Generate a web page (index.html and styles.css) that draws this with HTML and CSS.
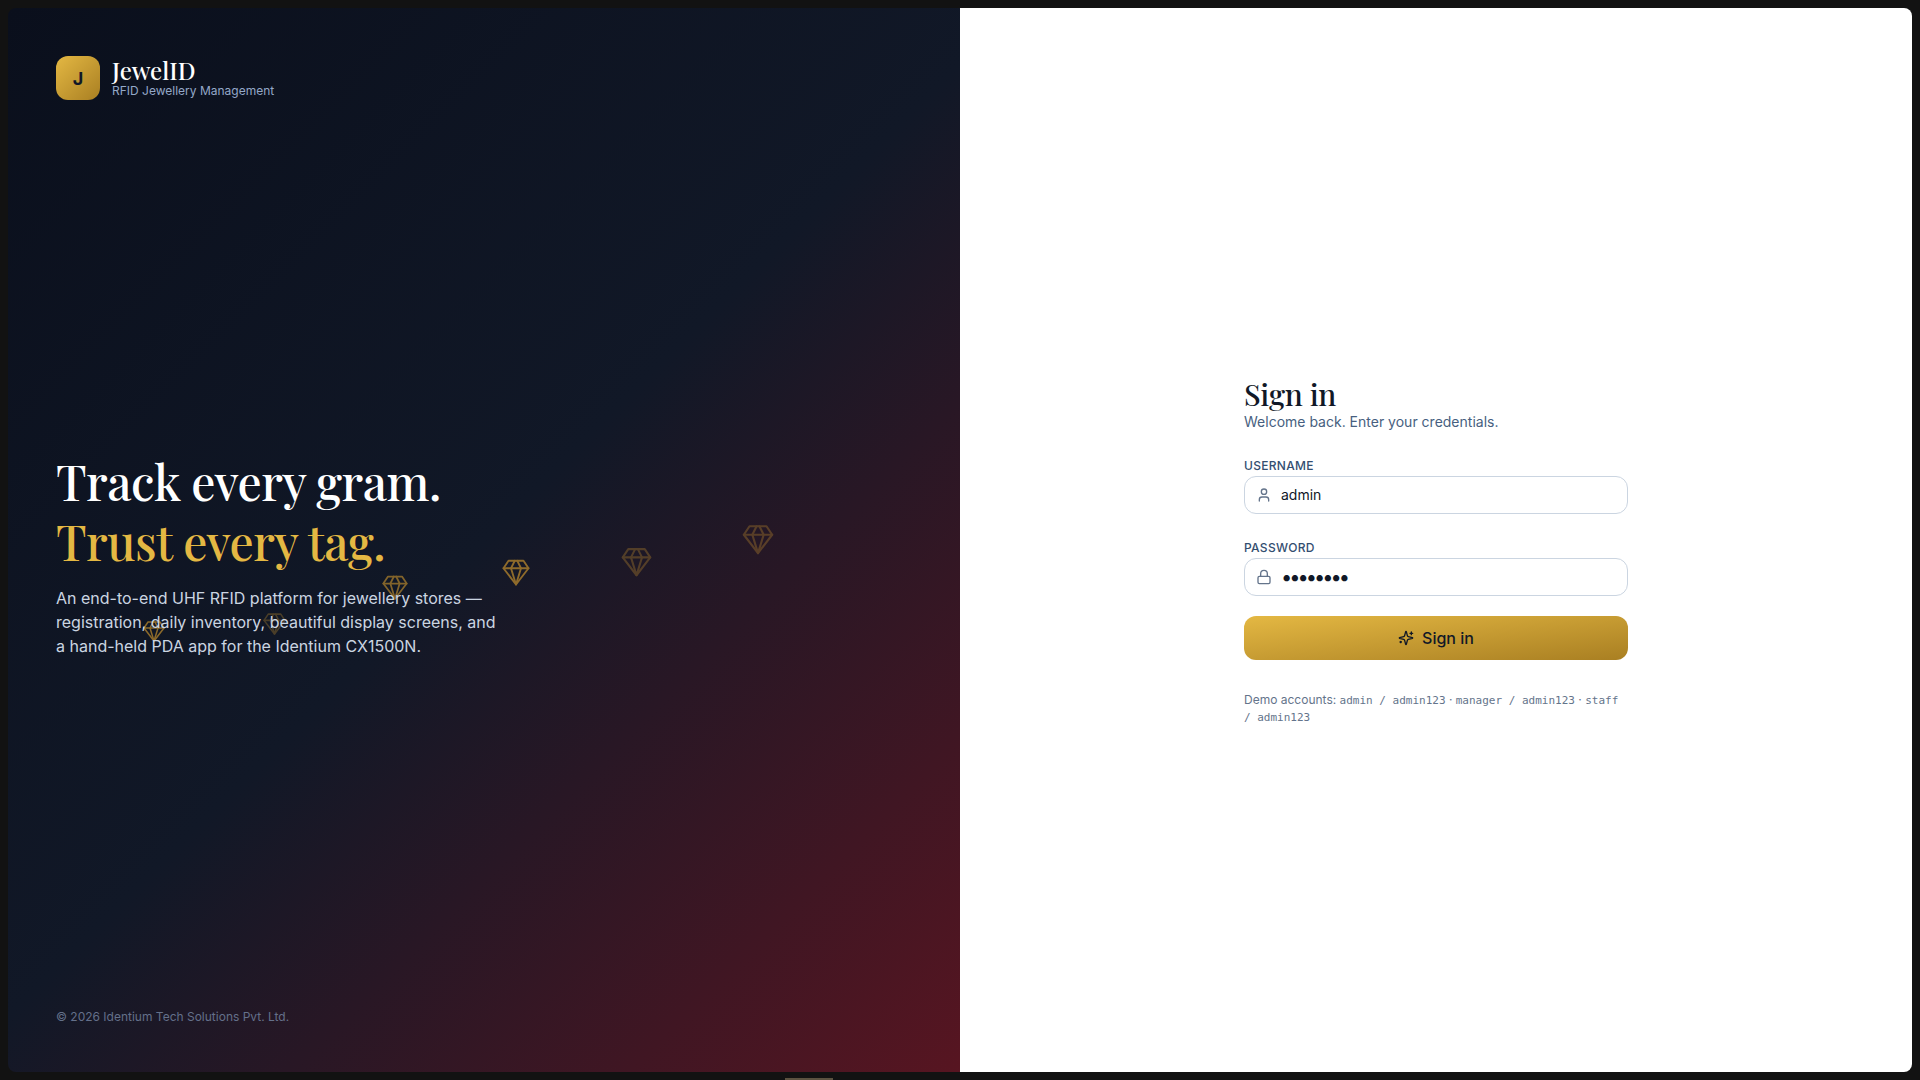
FILE: index.html
```html
<!DOCTYPE html>
<html lang="en">
<head>
<meta charset="utf-8">
<title>JewelID</title>
<link rel="stylesheet" href="styles.css">
</head>
<body>
<svg class="defs" width="0" height="0" aria-hidden="true">
  <symbol id="gem" viewBox="0 0 24 24"><path d="M6 3h12l4 6-10 13L2 9Z"/><path d="M11 3 8 9l4 13 4-13-3-6"/><path d="M2 9h20"/></symbol>
</svg>
<main class="window">
  <section class="hero">
    <div class="gems" aria-hidden="true">
      <svg class="gem g1"><use href="#gem"/></svg>
      <svg class="gem g2"><use href="#gem"/></svg>
      <svg class="gem g3"><use href="#gem"/></svg>
      <svg class="gem g4"><use href="#gem"/></svg>
      <svg class="gem g5"><use href="#gem"/></svg>
      <svg class="gem g6"><use href="#gem"/></svg>
    </div>
    <header class="brand">
      <div class="brand-mark">J</div>
      <div class="brand-text">
        <div class="brand-name">JewelID</div>
        <div class="brand-sub">RFID Jewellery Management</div>
      </div>
    </header>
    <div class="pitch">
      <h1 class="headline">Track every gram.<br><span class="headline-gold">Trust every tag.</span></h1>
      <p class="lead">An end-to-end UHF RFID platform for jewellery stores — registration, daily inventory, beautiful display screens, and a hand-held PDA app for the Identium CX1500N.</p>
    </div>
    <footer class="copyright">© 2026 Identium Tech Solutions Pvt. Ltd.</footer>
  </section>
  <section class="panel">
    <form class="form">
      <h2 class="title">Sign in</h2>
      <p class="subtitle">Welcome back. Enter your credentials.</p>
      <div class="field">
        <label class="label" for="u">USERNAME</label>
        <div class="input-box">
          <svg class="input-icon" viewBox="0 0 24 24"><path d="M19 21v-2a4 4 0 0 0-4-4H9a4 4 0 0 0-4 4v2"/><circle cx="12" cy="7" r="4"/></svg>
          <input id="u" class="input" type="text" value="admin">
        </div>
      </div>
      <div class="field">
        <label class="label" for="p">PASSWORD</label>
        <div class="input-box">
          <svg class="input-icon" viewBox="0 0 24 24"><rect x="3" y="11" width="18" height="11" rx="2" ry="2"/><path d="M7 11V7a5 5 0 0 1 10 0v4"/></svg>
          <input id="p" class="input input-pass" type="password" value="admin123">
        </div>
      </div>
      <button class="submit" type="button">
        <svg class="submit-icon" viewBox="0 0 24 24"><path d="M9.937 15.5A2 2 0 0 0 8.5 14.063l-6.135-1.582a.5.5 0 0 1 0-.962L8.5 9.936A2 2 0 0 0 9.937 8.5l1.582-6.135a.5.5 0 0 1 .963 0L14.063 8.5A2 2 0 0 0 15.5 9.937l6.135 1.581a.5.5 0 0 1 0 .964L15.5 14.063a2 2 0 0 0-1.437 1.437l-1.582 6.135a.5.5 0 0 1-.963 0z"/><path d="M20 3v4"/><path d="M22 5h-4"/><path d="M4 17v2"/><path d="M5 18H3"/></svg>
        Sign in
      </button>
      <p class="demo">Demo accounts: <code class="mono">admin / admin123</code> · <code class="mono">manager / admin123</code> · <code class="mono">staff / admin123</code></p>
    </form>
  </section>
</main>
<div class="taskbar-tab"></div>
</body>
</html>
```
FILE: styles.css
```css
* { box-sizing: border-box; }
html, body { height: 100%; }
body {
  margin: 0;
  padding: 8px;
  height: 1080px;
  overflow: hidden;
  background: #121212;
  font-family: Inter, "Liberation Sans", sans-serif;
  position: relative;
}
.defs { position: absolute; }
.window {
  height: 1064px;
  border-radius: 8px;
  overflow: hidden;
  display: grid;
  grid-template-columns: 952px 952px;
}
.hero {
  position: relative;
  display: flex;
  flex-direction: column;
  justify-content: space-between;
  padding: 48px 48px 47px;
  background: linear-gradient(135deg, #0a0f1c 0%, #111827 50%, #571521 100%);
  color: #fff;
}
.gems { position: absolute; inset: 0; }
.gem {
  position: absolute;
  fill: none;
  stroke: #dfa22f;
  stroke-width: 1.5;
  stroke-linecap: round;
  stroke-linejoin: round;
}
.g1 { left: 134px; top: 611px; width: 24px; height: 24px; opacity: .6; }
.g2 { left: 254px; top: 603px; width: 25px; height: 25px; opacity: .28; }
.g3 { left: 373px; top: 565px; width: 28px; height: 28px; opacity: .55; }
.g4 { left: 493px; top: 549px; width: 30px; height: 30px; opacity: .6; }
.g5 { left: 612px; top: 537px; width: 33px; height: 33px; opacity: .28; }
.g6 { left: 733px; top: 514px; width: 34px; height: 34px; opacity: .28; }
.brand { position: relative; display: flex; align-items: center; gap: 12px; }
.brand-mark {
  width: 44px;
  height: 44px;
  border-radius: 12px;
  background: linear-gradient(135deg, #e4b843, #a97f22);
  color: #111827;
  display: flex;
  align-items: center;
  justify-content: center;
  font-weight: 700;
  font-size: 18px;
}
.brand-name { font-family: "Playfair Display", "Liberation Serif", serif; font-size: 24px; font-weight: 500; line-height: 28px; margin-top: -1px; }
.brand-sub { font-size: 12px; line-height: 16px; color: #94a8c8; margin-top: -1px; }
.pitch { position: relative; }
.headline {
  margin: 0;
  font-family: "Playfair Display", "Liberation Serif", serif;
  font-weight: 500;
  font-size: 48px;
  line-height: 60px;
  letter-spacing: -0.01em;
}
.headline-gold { color: #e4b843; }
.lead { margin: 15px 0 0; max-width: 448px; font-size: 16px; line-height: 24px; color: #cbd5e1; }
.copyright { position: relative; font-size: 12px; line-height: 16px; color: #64708a; }
.panel {
  background: #fff;
  display: flex;
  align-items: center;
  justify-content: center;
}
.form { width: 384px; padding-top: 21px; }
.title {
  margin: 0;
  font-family: "Playfair Display", "Liberation Serif", serif;
  font-weight: 500;
  font-size: 30px;
  line-height: 36px;
  letter-spacing: -0.01em;
  color: #111827;
}
.subtitle { margin: 0; font-size: 14px; line-height: 20px; color: #475f80; }
.field { margin-top: 26px; }
.label { display: block; font-size: 12px; line-height: 16px; font-weight: 500; letter-spacing: .3px; color: #334e70; margin-bottom: 2px; }
.input-box {
  display: flex;
  align-items: center;
  height: 38px;
  border: 1px solid #cbd5e1;
  border-radius: 12px;
  padding: 0 11px;
  background: #fff;
}
.input-icon {
  width: 16px;
  height: 16px;
  fill: none;
  stroke: #64748b;
  stroke-width: 2;
  stroke-linecap: round;
  stroke-linejoin: round;
  flex: none;
}
.input {
  border: 0;
  outline: 0;
  flex: 1;
  margin-left: 9px;
  padding: 0 0 2px;
  font: 14px Inter, sans-serif;
  color: #111827;
  background: transparent;
}
.input-pass { padding: 0; font-size: 20px; letter-spacing: -3px; }
.submit {
  margin-top: 20px;
  width: 100%;
  height: 44px;
  border: 0;
  border-radius: 12px;
  background: linear-gradient(to bottom right, #e4b843, #a97f22);
  display: flex;
  align-items: center;
  justify-content: center;
  gap: 8px;
  font: 500 16px Inter, sans-serif;
  color: #111827;
}
.submit-icon {
  width: 16px;
  height: 16px;
  fill: none;
  stroke: #111827;
  stroke-width: 2;
  stroke-linecap: round;
  stroke-linejoin: round;
}
.demo { margin: 31px 0 0; font-size: 12px; line-height: 17px; color: #64748b; }
.mono { font-family: "DejaVu Sans Mono", monospace; font-size: 11px; line-height: 1; }
.taskbar-tab {
  position: absolute;
  left: 785px;
  top: 1078px;
  width: 48px;
  height: 2px;
  background: #5c5240;
}
```
